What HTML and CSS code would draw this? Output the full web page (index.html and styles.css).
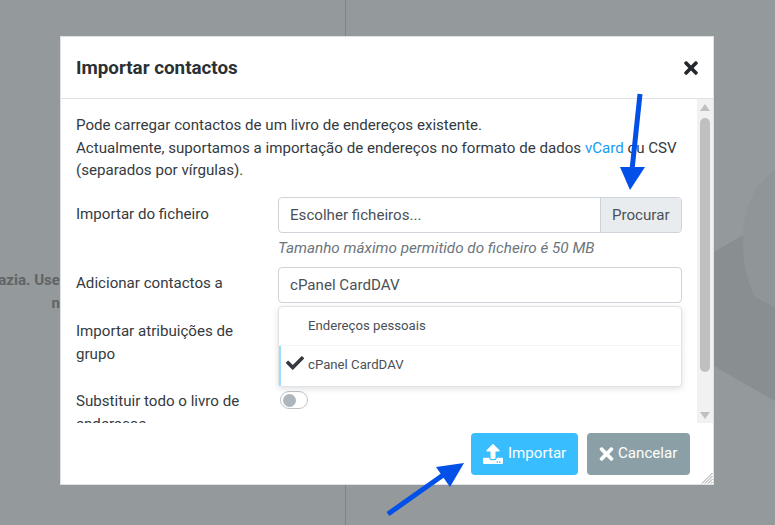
FILE: index.html
```html
<!DOCTYPE html>
<html lang="pt">
<head>
<meta charset="utf-8">
<title>Importar contactos</title>
<link rel="stylesheet" href="styles.css">
</head>
<body>
<div class="page">
  <div class="divider"></div>
  <svg class="bg-shape" viewBox="0 0 775 525" aria-hidden="true">
    <path class="shape-dark" d="M714 252 L775 217 L775 401 L714 366 Z"/>
    <path class="shape-light" d="M775 170 C752 186 743 210 743 240 C743 263 747 282 755 297 L775 308 Z"/>
  </svg>
  <p class="behind behind-a">azia. Use</p>
  <p class="behind behind-b">n</p>

  <div class="dialog">
    <header class="dialog-head">
      <h2 class="dialog-title">Importar contactos</h2>
      <svg class="close-icon" viewBox="0 0 352 512"><path d="M242.72 256l100.07-100.07c12.28-12.28 12.28-32.19 0-44.48l-22.24-22.24c-12.28-12.28-32.19-12.28-44.48 0L176 189.28 75.93 89.21c-12.28-12.28-32.19-12.28-44.48 0L9.21 111.45c-12.28 12.28-12.28 32.19 0 44.48L109.28 256 9.21 356.07c-12.28 12.28-12.28 32.19 0 44.48l22.24 22.24c12.28 12.28 32.2 12.28 44.48 0L176 322.72l100.07 100.07c12.28 12.28 32.2 12.28 44.48 0l22.24-22.24c12.28-12.28 12.28-32.19 0-44.48L242.72 256z"/></svg>
    </header>

    <div class="dialog-body">
      <div class="content">
        <p class="intro">Pode carregar contactos de um livro de endereços existente.<br>Actualmente, suportamos a importação de endereços no formato de dados <a class="link" href="#">vCard</a> ou CSV (separados por vírgulas).</p>

        <div class="row row-file">
          <label class="label label-file">Importar do ficheiro</label>
          <div class="control">
            <div class="file-input">
              <span class="file-text">Escolher ficheiros...</span>
              <span class="file-btn">Procurar</span>
            </div>
            <small class="help">Tamanho máximo permitido do ficheiro é 50 MB</small>
          </div>
        </div>

        <div class="row row-select">
          <label class="label">Adicionar contactos a</label>
          <div class="control select-wrap">
            <div class="select">cPanel CardDAV</div>
            <ul class="menu">
              <li class="menu-item"><span>Endereços pessoais</span></li>
              <li class="menu-item menu-item-on">
                <svg class="check-icon" viewBox="0 0 512 512"><path d="M173.898 439.404l-166.4-166.4c-9.997-9.997-9.997-26.206 0-36.204l36.203-36.204c9.997-9.998 26.207-9.998 36.204 0L192 312.69 432.095 72.596c9.997-9.997 26.207-9.997 36.204 0l36.203 36.204c9.997 9.997 9.997 26.206 0 36.204l-294.4 294.401c-9.998 9.997-26.207 9.997-36.204-.001z"/></svg>
                <span>cPanel CardDAV</span>
              </li>
            </ul>
          </div>
        </div>

        <div class="row row-group">
          <label class="label">Importar atribuições de grupo</label>
          <div class="control"></div>
        </div>

        <div class="row row-replace">
          <label class="label">Substituir todo o livro de endereços</label>
          <div class="control"><span class="toggle"><span class="knob"></span></span></div>
        </div>
      </div>

      <div class="scrollbar">
        <span class="sb-up"></span>
        <span class="sb-track"><span class="sb-thumb"></span></span>
        <span class="sb-down"></span>
      </div>
    </div>

    <footer class="dialog-foot">
      <button class="btn btn-primary">
        <svg class="btn-icon-up" viewBox="0 0 512 512"><path d="M296 384h-80c-13.3 0-24-10.7-24-24V192h-87.7c-17.8 0-26.7-21.5-14.1-34.1L242.3 5.7c7.5-7.5 19.8-7.5 27.3 0l152.2 152.2c12.6 12.6 3.7 34.1-14.1 34.1H320v168c0 13.3-10.7 24-24 24zm216-8v112c0 13.3-10.7 24-24 24H24c-13.3 0-24-10.7-24-24V376c0-13.3 10.7-24 24-24h136v8c0 30.9 25.1 56 56 56h80c30.9 0 56-25.1 56-56v-8h136c13.3 0 24 10.7 24 24zm-124 88c0-11-9-20-20-20s-20 9-20 20 9 20 20 20 20-9 20-20zm64 0c0-11-9-20-20-20s-20 9-20 20 9 20 20 20 20-9 20-20z"/></svg>
        <span class="btn-text">Importar</span>
      </button>
      <button class="btn btn-cancel">
        <svg class="btn-icon-x" viewBox="0 0 352 512"><path d="M242.72 256l100.07-100.07c12.28-12.28 12.28-32.19 0-44.48l-22.24-22.24c-12.28-12.28-32.19-12.28-44.48 0L176 189.28 75.93 89.21c-12.28-12.28-32.19-12.28-44.48 0L9.21 111.45c-12.28 12.28-12.28 32.19 0 44.48L109.28 256 9.21 356.07c-12.28 12.28-12.28 32.19 0 44.48l22.24 22.24c12.28 12.28 32.2 12.28 44.48 0L176 322.72l100.07 100.07c12.28 12.28 32.2 12.28 44.48 0l22.24-22.24c12.28-12.28 12.28-32.19 0-44.48L242.72 256z"/></svg>
        <span class="btn-text">Cancelar</span>
      </button>
      <svg class="grip" viewBox="0 0 12 12"><path d="M11.5 1 L1 11.5 M11.5 4 L4 11.5 M11.5 7 L7 11.5 M11.5 10 L10 11.5"/></svg>
    </footer>
  </div>

  <svg class="arrows" viewBox="0 0 775 525" aria-hidden="true">
    <path class="arrow-line" d="M640 94 L632 170"/>
    <path class="arrow-head" d="M620 167 L645 167 L630 190 Z"/>
    <path class="arrow-line" d="M388 514 L446 473"/>
    <path class="arrow-head" d="M436 467 L464 463 L450 487 Z"/>
  </svg>
</div>
</body>
</html>
```
FILE: styles.css
```css
* { box-sizing: border-box; }
html, body { margin: 0; padding: 0; }
body {
  width: 775px;
  height: 525px;
  overflow: hidden;
  font-family: Roboto, "Liberation Sans", sans-serif;
  color: #343a40;
}
.page {
  position: relative;
  width: 775px;
  height: 525px;
  overflow: hidden;
  background: #94999b;
  padding: 36px 61px 40px 60px;
}
.divider {
  position: absolute;
  left: 345px;
  top: 0;
  width: 1px;
  height: 525px;
  background: #7f8486;
}
.bg-shape { position: absolute; left: 0; top: 0; width: 775px; height: 525px; }
.shape-dark { fill: #898e90; }
.shape-light { fill: #909597; }
.behind {
  position: absolute;
  margin: 0;
  font-size: 15.1px;
  font-weight: 700;
  line-height: 22px;
  color: #5f6466;
  white-space: nowrap;
}
.behind-a { right: 715px; top: 269px; }
.behind-b { right: 715px; top: 292px; }

.dialog {
  position: relative;
  width: 654px;
  height: 449px;
  background: #fff;
  border: 1px solid #dee2e6;
  display: flex;
  flex-direction: column;
}
.dialog-head {
  height: 62px;
  flex: none;
  padding: 0 15px 0 15px;
  display: flex;
  align-items: center;
  justify-content: space-between;
  border-bottom: 1px solid #dee2e6;
}
.dialog-title {
  margin: 0;
  padding-top: 1px;
  font-size: 18.8px;
  line-height: 27px;
  font-weight: 700;
  color: #2b3035;
}
.close-icon { width: 14px; height: 20px; fill: #22282e; display: block; }

.dialog-body {
  flex: none;
  height: 324px;
  display: flex;
  overflow: hidden;
}
.content {
  flex: none;
  width: 636px;
  height: 324px;
  padding: 15px 15px 0 15px;
  overflow: hidden;
  font-size: 15.12px;
  line-height: 22.5px;
}
.intro { margin: 0 0 15.5px; }
.link { color: #179bf3; text-decoration: none; }

.row { display: flex; align-items: flex-start; }
.label { flex: none; width: 202px; padding-top: 5px; padding-right: 30px; display: block; }
.label-file { padding-top: 6px; }
.control { flex: none; width: 404px; }
.row-file { height: 70px; }
.row-select { height: 48px; }
.row-group { height: 70px; }

.file-input {
  display: flex;
  height: 36px;
  border: 1px solid #ced4da;
  border-radius: 4px;
  overflow: hidden;
}
.file-text { flex: 1; padding: 6px 11px; color: #495057; line-height: 22.5px; }
.file-btn {
  flex: none;
  width: 81px;
  padding: 6px 11px;
  background: #e9ecef;
  border-left: 1px solid #ced4da;
  color: #495057;
  line-height: 22.5px;
}
.help {
  display: block;
  margin-top: 4px;
  font-size: 15.25px;
  font-style: italic;
  line-height: 22px;
  color: #6c757d;
}
.select-wrap { position: relative; }
.select {
  height: 36px;
  border: 1px solid #ced4da;
  border-radius: 4px;
  padding: 6px 11px;
  line-height: 23px;
  color: #495057;
}
.menu {
  position: absolute;
  z-index: 2;
  left: 0;
  top: 39px;
  width: 404px;
  margin: 0;
  padding: 0;
  list-style: none;
  background: #fff;
  border: 1px solid #dfe3e7;
  border-radius: 4px;
  box-shadow: 0 2px 6px rgba(0, 0, 0, .12);
  font-size: 13.2px;
  color: #495057;
}
.menu-item {
  height: 38px;
  padding-left: 29px;
  display: flex;
  align-items: center;
  position: relative;
}
.menu-item + .menu-item {
  height: 41px;
  padding-bottom: 2px;
  border-top: 1px solid #f4f5f6;
}
.menu-item-on { box-shadow: inset 2px 0 0 #9fdcf9; }
.check-icon {
  position: absolute;
  left: 7px;
  top: 8px;
  width: 18px;
  height: 18px;
  fill: #343a40;
}
.toggle {
  display: block;
  width: 28px;
  height: 18px;
  margin: 6px 0 0 2px;
  border: 1px solid #bfc4c9;
  border-radius: 9px;
  background: #fff;
  padding: 1.5px 2px;
}
.knob { display: block; width: 13px; height: 13px; border-radius: 50%; background: #adb5bd; }

.scrollbar {
  flex: none;
  width: 16px;
  height: 324px;
  background: #f1f1f1;
  display: flex;
  flex-direction: column;
  align-items: center;
  padding-top: 5px;
}
.sb-up, .sb-down { width: 0; height: 0; border-left: 5px solid transparent; border-right: 5px solid transparent; flex: none; }
.sb-up { border-bottom: 7px solid #c0c0c0; }
.sb-down { border-top: 7px solid #c0c0c0; }
.sb-track { flex: 1; width: 10px; padding-top: 7px; }
.sb-thumb { display: block; width: 10px; height: 254px; background: #c0c0c0; border-radius: 5px; }
.sb-down { margin-bottom: 4px; }

.dialog-foot {
  position: relative;
  flex: 1;
  display: flex;
  justify-content: flex-end;
  align-items: flex-start;
  gap: 9px;
  padding: 10px 23px 0 0;
}
.btn {
  height: 42px;
  border: 0;
  border-radius: 4px;
  color: #fff;
  font-family: inherit;
  font-size: 15.12px;
  display: flex;
  align-items: center;
  justify-content: flex-start;
  white-space: nowrap;
}
.btn-text { position: relative; top: -1px; }
.btn-primary { width: 107px; background: #38bdff; gap: 5px; padding: 0 0 0 12px; }
.btn-cancel { width: 103px; background: #8ba0a6; gap: 4px; padding: 0 0 0 12px; }
.btn-icon-up { width: 20px; height: 20px; fill: #fff; flex: none; }
.btn-icon-x { width: 15px; height: 20px; fill: #fff; flex: none; }
.grip {
  position: absolute;
  right: 0;
  bottom: 0;
  width: 12px;
  height: 12px;
  stroke: #9a9a9a;
  stroke-width: 1;
  fill: none;
}
.arrows { position: absolute; left: 0; top: 0; width: 775px; height: 525px; pointer-events: none; }
.arrow-line { stroke: #0350e8; stroke-width: 5; fill: none; }
.arrow-head { fill: #0350e8; }
```
